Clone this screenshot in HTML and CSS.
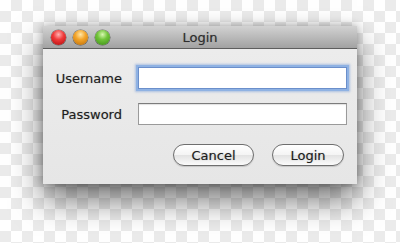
FILE: index.html
```html
<!DOCTYPE html>
<html>
<head>
    <title>Login</title>
    <link rel="stylesheet" href="styles.css">
</head>
<body>
    <div class="window">
        <div class="titlebar">
            <div class="lights">
                <span class="light close"></span>
                <span class="light minimize"></span>
                <span class="light zoom"></span>
            </div>
            <div class="title">Login</div>
        </div>
        <div class="content">
            <div class="form">
                <label for="username">Username</label>
                <input type="text" id="username" class="field focused">
                <label for="password">Password</label>
                <input type="password" id="password" class="field">
            </div>
            <div class="buttons">
                <button class="btn cancel">Cancel</button>
                <button class="btn login">Login</button>
            </div>
        </div>
    </div>
</body>
</html>
```

FILE: styles.css
```css
html, body {
    margin: 0;
    height: 100%;
}

body {
    font-family: "DejaVu Sans", Arial, sans-serif;
    background-color: #ffffff;
    background-image: conic-gradient(#ebebeb 25%, #ffffff 0 50%, #ebebeb 0 75%, #ffffff 0);
    background-size: 22px 22px;
    overflow: hidden;
    padding-top: 26px;
    box-sizing: border-box;
}

.window {
    width: 314px;
    height: 158px;
    margin-left: 43px;
    background: #e8e8e8;
    box-shadow: 0 16px 30px rgba(0, 0, 0, 0.55), 0 0 8px rgba(0, 0, 0, 0.3);
    display: flex;
    flex-direction: column;
}

.titlebar {
    height: 22px;
    border-bottom: 1px solid #5e5e5e;
    background: linear-gradient(#d2d2d2, #a2a2a2);
    display: flex;
    align-items: center;
    position: relative;
}

.lights {
    display: flex;
    gap: 7px;
    padding-left: 8px;
}

.light {
    width: 15px;
    height: 15px;
    border-radius: 50%;
    box-shadow: 0 0 0 0.5px rgba(0, 0, 0, 0.45);
}

.close {
    background: radial-gradient(circle at 50% 30%, #ffb2b2 0, #f03b3b 40%, #b00808 100%);
}

.minimize {
    background: radial-gradient(circle at 50% 30%, #ffe7a8 0, #f4a52a 40%, #b86a06 100%);
}

.zoom {
    background: radial-gradient(circle at 50% 30%, #d8f7b0 0, #71c43a 40%, #3a8b14 100%);
}

.title {
    position: absolute;
    left: 0;
    right: 0;
    text-align: center;
    font-size: 13px;
    color: #2e2e2e;
    text-shadow: 0 0 1px rgba(0, 0, 0, 0.35);
    pointer-events: none;
}

.content {
    flex: 1;
    padding: 18px 10px 0 0;
    background: linear-gradient(#ececec, #e6e6e6);
}

.form {
    display: grid;
    grid-template-columns: 79px 209px;
    column-gap: 16px;
    row-gap: 14px;
    align-items: center;
}

.form label {
    text-align: right;
    font-size: 13px;
    color: #1e1e1e;
    text-shadow: 0 0 1px rgba(0, 0, 0, 0.35);
}

.field {
    box-sizing: border-box;
    height: 22px;
    margin: 0;
    padding: 2px 4px;
    border: 1px solid #9a9a9a;
    border-top-color: #7c7c7c;
    background: #ffffff;
    box-shadow: inset 0 1px 1px rgba(0, 0, 0, 0.12);
    outline: none;
}

.field.focused {
    box-shadow: 0 0 0 2px #8fb2e3, 0 0 2px 3px rgba(110, 150, 215, 0.5);
    border-color: #6b8fcb;
}

.buttons {
    display: flex;
    justify-content: flex-end;
    gap: 18px;
    padding-right: 3px;
    margin-top: 19px;
}

.btn {
    height: 22px;
    padding: 0;
    border: 1px solid #6e6e6e;
    border-radius: 11px;
    background: linear-gradient(#ffffff 0%, #f4f4f4 50%, #e2e2e2 51%, #fbfbfb 100%);
    font-family: "DejaVu Sans", Arial, sans-serif;
    font-size: 13px;
    color: #1e1e1e;
    text-shadow: 0 0 1px rgba(0, 0, 0, 0.35);
    box-shadow: 0 1px 1px rgba(0, 0, 0, 0.15);
}

.cancel {
    width: 81px;
}

.login {
    width: 72px;
}
```
